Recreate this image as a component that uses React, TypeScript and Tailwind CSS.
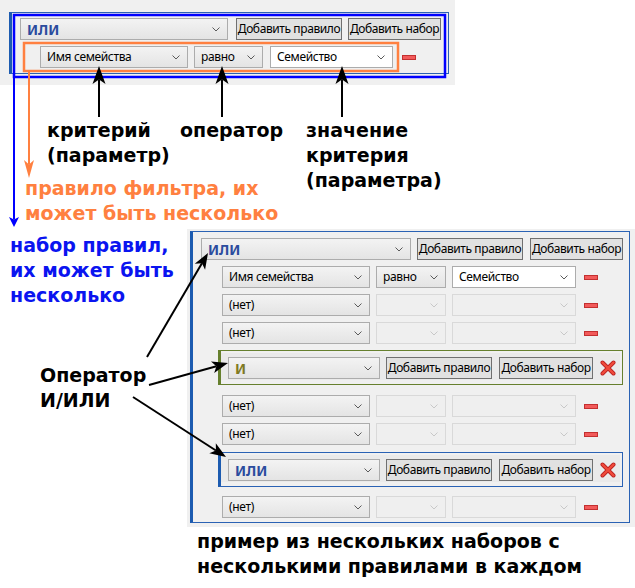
import React from 'react';

type Kind = 'head' | 'normal' | 'off' | 'white';

function Chevron({ off }: { off?: boolean }) {
  return (
    <svg width="8" height="5" viewBox="0 0 8 5" className="shrink-0">
      <path d="M0.5 0.5L4 4L7.5 0.5" fill="none" stroke={off ? '#c8c8c8' : '#5a5a5a'} strokeWidth="1" />
    </svg>
  );
}

function Select({ w, kind = 'normal', text, color }: { w: string; kind?: Kind; text?: string; color?: string }) {
  const skin =
    kind === 'white'
      ? 'bg-white border-[#acacac]'
      : kind === 'off'
      ? 'bg-[#efefef] border-[#d9d9d9]'
      : 'bg-linear-to-b from-[#f3f3f3] to-[#e4e4e4] border-[#acacac]';
  return (
    <div className={`${w} h-[22px] shrink-0 border ${skin} flex items-center justify-between pl-[6px] pr-[7px]`}>
      {kind === 'head' ? (
        <span className="text-[14px] font-bold" style={{ color }}>{text}</span>
      ) : (
        <span className="text-[12px] tracking-[-0.35px] text-black">{text}</span>
      )}
      <Chevron off={kind === 'off'} />
    </div>
  );
}

function Btn({ w, label }: { w: string; label: string }) {
  return (
    <div className={`${w} h-[22px] shrink-0 border border-[#707070] bg-[#e1e1e1] flex items-center justify-center text-[12px] tracking-[-0.4px] text-black whitespace-nowrap`}>
      {label}
    </div>
  );
}

function Minus() {
  return <div className="w-[14px] h-[5px] shrink-0 bg-[#f25a5a] border border-[#c33030]" />;
}

function Cross() {
  return (
    <svg width="16" height="16" viewBox="0 0 16 16" className="shrink-0">
      <path d="M2.5 2.5L13.5 13.5M13.5 2.5L2.5 13.5" stroke="#b82020" strokeWidth="4" strokeLinecap="round" />
      <path d="M2.5 2.5L13.5 13.5M13.5 2.5L2.5 13.5" stroke="#f04a3a" strokeWidth="2.4" strokeLinecap="round" />
    </svg>
  );
}

// пустое правило (нет)
function EmptyRule({ mt }: { mt: string }) {
  return (
    <div className={`flex items-center pl-[21px] ${mt}`}>
      <Select w="w-[148px]" text="(нет)" />
      <div className="ml-[6px]"><Select w="w-[70px]" kind="off" /></div>
      <div className="ml-[6px]"><Select w="w-[124px]" kind="off" /></div>
      <div className="ml-[8px]"><Minus /></div>
    </div>
  );
}

function Nested({ mt, op, color, border }: { mt: string; op: string; color: string; border: string }) {
  return (
    <div className={`${mt} ml-[17px] w-[405px] h-[35px] border border-l-[3px] ${border} pt-[2px] pr-[2px]`}>
      <div className="h-[27px] bg-[#eaeaea] flex items-start pl-[7px] pt-[4px]">
        <Select w="w-[152px]" kind="head" text={op} color={color} />
        <div className="ml-[6px]"><Btn w="w-[106px]" label="Добавить правило" /></div>
        <div className="ml-[7px]"><Btn w="w-[94px]" label="Добавить набор" /></div>
        <div className="ml-[7px] mt-[3px]"><Cross /></div>
      </div>
    </div>
  );
}

function arrow(x1: number, y1: number, x2: number, y2: number, color: string, L: number, W: number, sw: number, key: string) {
  const dx = x2 - x1;
  const dy = y2 - y1;
  const len = Math.hypot(dx, dy);
  const ux = dx / len;
  const uy = dy / len;
  const nx = -uy;
  const ny = ux;
  const bx = x2 - ux * L;
  const by = y2 - uy * L;
  const notch = L * 0.25;
  const pts = [
    [x2, y2],
    [bx + nx * W, by + ny * W],
    [bx + ux * notch, by + uy * notch],
    [bx - nx * W, by - ny * W],
  ]
    .map((p) => p.join(','))
    .join(' ');
  return (
    <g key={key}>
      <line x1={x1} y1={y1} x2={bx + ux * notch} y2={by + uy * notch} stroke={color} strokeWidth={sw} />
      <polygon points={pts} fill={color} />
    </g>
  );
}

export default function App() {
  const note = "absolute font-['DejaVu_Sans',sans-serif] font-bold text-[19px] leading-[25px] whitespace-nowrap";
  return (
    <div className="relative w-[635px] h-[588px] bg-white overflow-hidden font-['Noto_Sans',sans-serif]">
      {/* Скриншот 1: один набор с одним правилом */}
      <div className="absolute left-0 top-0 w-[455px] h-[85px] bg-[#f0f0f0] pt-[12px] pl-[9px]">
        <div className="w-[440px] h-[62px] border border-[#2a62b4] border-l-[3px] border-l-[#1c5bb0] pl-[8px] pt-[5px] flex flex-col">
          <div className="flex items-center">
            <Select w="w-[208px]" kind="head" text="ИЛИ" color="#2b4c9e" />
            <div className="ml-[8px]"><Btn w="w-[106px]" label="Добавить правило" /></div>
            <div className="ml-[6px]"><Btn w="w-[93px]" label="Добавить набор" /></div>
          </div>
          <div className="flex items-center pl-[20px] mt-[6px]">
            <Select w="w-[148px]" text="Имя семейства" />
            <div className="ml-[6px]"><Select w="w-[69px]" text="равно" /></div>
            <div className="ml-[7px]"><Select w="w-[123px]" kind="white" text="Семейство" /></div>
            <div className="ml-[9px]"><Minus /></div>
          </div>
        </div>
      </div>

      {/* Скриншот 2: несколько наборов */}
      <div className="absolute left-[187px] top-[229px] w-[448px] h-[298px] bg-[#f0f0f0] pl-[3px] pt-[2px]">
        <div className="w-[440px] h-[292px] border border-[#2a62b4] border-l-[3px] border-l-[#1c5bb0] pl-[8px] pt-[6px] flex flex-col">
          <div className="flex items-center">
            <Select w="w-[210px]" kind="head" text="ИЛИ" color="#2b4c9e" />
            <div className="ml-[6px]"><Btn w="w-[106px]" label="Добавить правило" /></div>
            <div className="ml-[7px]"><Btn w="w-[93px]" label="Добавить набор" /></div>
          </div>
          <div className="flex items-center pl-[21px] mt-[6px]">
            <Select w="w-[148px]" text="Имя семейства" />
            <div className="ml-[6px]"><Select w="w-[70px]" text="равно" /></div>
            <div className="ml-[6px]"><Select w="w-[124px]" kind="white" text="Семейство" /></div>
            <div className="ml-[8px]"><Minus /></div>
          </div>
          <EmptyRule mt="mt-[6px]" />
          <EmptyRule mt="mt-[6px]" />
          <Nested mt="mt-[6px]" op="И" color="#7f7a22" border="border-[#66802e]" />
          <EmptyRule mt="mt-[10px]" />
          <EmptyRule mt="mt-[6px]" />
          <Nested mt="mt-[7px]" op="ИЛИ" color="#2b4c9e" border="border-[#2a62b4] border-l-[#1c5bb0]" />
          <EmptyRule mt="mt-[9px]" />
        </div>
      </div>

      {/* Подписи */}
      <div className={`${note} left-[47px] top-[118px] text-black`}>
        критерий<br />(параметр)
      </div>
      <div className={`${note} left-[180px] top-[118px] text-black`}>оператор</div>
      <div className={`${note} left-[306px] top-[118px] text-black`}>
        значение<br />критерия<br />(параметра)
      </div>
      <div className={`${note} left-[25px] top-[176px] text-[#ff8040]`}>
        правило фильтра, их<br />может быть несколько
      </div>
      <div className={`${note} left-[10px] top-[233px] leading-[24px] text-[#0a14f0]`}>
        набор правил,<br />их может быть<br />несколько
      </div>
      <div className={`${note} left-[40px] top-[363px] text-[18.5px] leading-[25px] text-black`}>
        Оператор<br />И/ИЛИ
      </div>
      <div className={`${note} left-[197px] top-[529px] text-black`}>
        пример из нескольких наборов с<br />несколькими правилами в каждом
      </div>

      {/* Стрелки и рамки поверх */}
      <svg className="absolute left-0 top-0 pointer-events-none" width="635" height="588" viewBox="0 0 635 588">
        <rect x="14" y="15" width="431" height="62" fill="none" stroke="#0000ff" strokeWidth="2.5" />
        <rect x="24" y="43" width="374" height="28" fill="none" stroke="#ff8040" strokeWidth="2.5" />
        {arrow(14, 77, 14, 227, '#0000ff', 10, 5, 2, 'b')}
        {arrow(29, 71, 29, 178, '#ff8040', 18, 5, 2, 'o')}
        {arrow(99, 117, 99, 66, '#000', 18, 6.5, 2, 'k1')}
        {arrow(222, 117, 222, 66, '#000', 18, 6.5, 2, 'k2')}
        {arrow(342, 117, 342, 66, '#000', 18, 6.5, 2, 'k3')}
        {arrow(147, 357, 208, 253, '#000', 16, 6, 2, 'k4')}
        {arrow(149, 385, 228, 363, '#000', 16, 6, 2, 'k5')}
        {arrow(133, 397, 226, 457, '#000', 16, 6, 2, 'k6')}
      </svg>
    </div>
  );
}
